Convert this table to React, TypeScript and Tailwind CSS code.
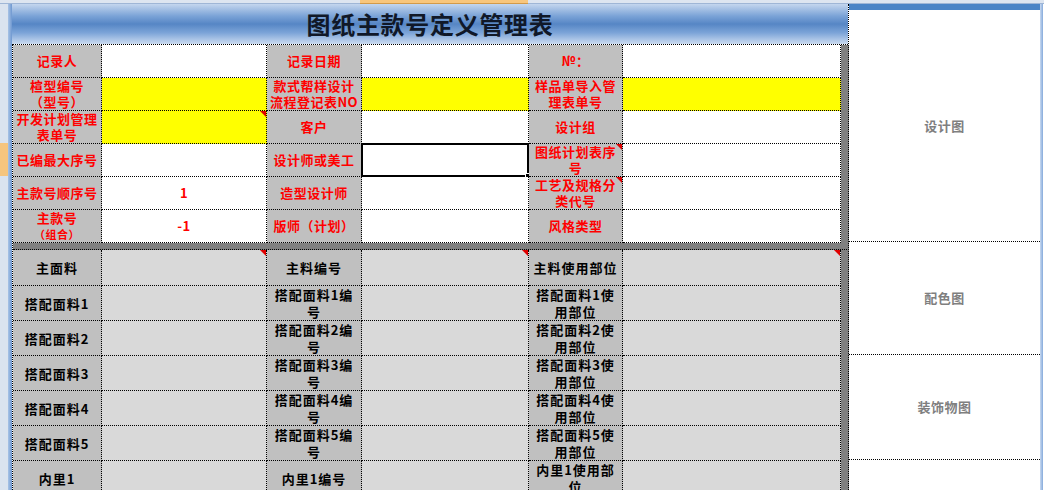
import type { ReactNode } from 'react';

type CellProps = {
  children?: ReactNode;
  className?: string;
  comment?: boolean;
  selected?: boolean;
};

function Cell({ children, className = '', comment, selected }: CellProps) {
  return (
    <div
      className={`relative flex items-center justify-center px-[2px] text-center border-r border-b border-dotted border-black font-bold text-[13px] leading-[16px] tracking-[0.5px] ${className}`}
    >
      {children}
      {comment && (
        <div className="absolute top-0 right-0 w-0 h-0 border-l-[6px] border-l-transparent border-t-[6px] border-t-[#e00000]" />
      )}
      {selected && (
        <div className="absolute -left-[1px] -top-[1px] -right-[1px] -bottom-[1px] border-2 border-black">
          <div className="absolute -right-[4px] -bottom-[4px] w-[6px] h-[6px] bg-black border border-white" />
        </div>
      )}
    </div>
  );
}

const label = 'bg-[#c0c0c0] text-[#ff0000]';
const white = 'bg-white text-[#ff0000]';
const yellow = 'bg-[#ffff00]';
const strip = 'bg-[#808080]';
const grayLabel = 'bg-[#c0c0c0] text-black tracking-[1px] leading-[17px]';
const grayValue = 'bg-[#d9d9d9]';

const lower = [
  { a: '搭配面料1', b: '搭配面料1编', b2: '号', c: '搭配面料1使', c2: '用部位' },
  { a: '搭配面料2', b: '搭配面料2编', b2: '号', c: '搭配面料2使', c2: '用部位' },
  { a: '搭配面料3', b: '搭配面料3编', b2: '号', c: '搭配面料3使', c2: '用部位' },
  { a: '搭配面料4', b: '搭配面料4编', b2: '号', c: '搭配面料4使', c2: '用部位' },
  { a: '搭配面料5', b: '搭配面料5编', b2: '号', c: '搭配面料5使', c2: '用部位' },
  { a: '内里1', b: '内里1编号', b2: '', c: '内里1使用部', c2: '位' },
];

export default function App() {
  return (
    <div className="w-[1044px] h-[490px] overflow-hidden bg-white font-['Noto_Sans_CJK_SC',sans-serif]">
      {/* column header strip */}
      <div className="flex h-[4px]">
        <div className="w-[360px] bg-[#dde5f0] border-b border-[#9fb6d6]" />
        <div className="w-[168px] bg-[#f8c67c] border-b border-[#d29a4a]" />
        <div className="flex-1 bg-[#dde5f0] border-b border-[#9fb6d6]" />
      </div>

      <div className="flex">
        {/* row header strip */}
        <div className="flex w-[12px]">
          <div className="w-[8px] flex flex-col bg-[#dae3ef]">
            <div className="h-[139px]" />
            <div className="h-[33px] bg-[#f6c57e]" />
            <div className="flex-1" />
          </div>
          <div className="w-[4px] bg-gradient-to-r from-[#a8c3e6] to-[#6f98d0]" />
        </div>

        {/* main sheet */}
        <div className="w-[836px]">
          <div className="h-[40px] flex items-center justify-center bg-[linear-gradient(to_bottom,#c4d6ee_0%,#7ba3d7_30%,#5686c5_50%,#7ca4d8_72%,#cbdbf0_100%)]">
            <span className="text-[24px] font-bold tracking-[0.7px] text-[#101828]">图纸主款号定义管理表</span>
          </div>

          <div className="grid grid-cols-[89px_165px_95px_167px_94px_218px_8px] border-l border-t border-dotted border-black">
            {/* row 1 */}
            <Cell className={`h-[33px] ${label}`}>记录人</Cell>
            <Cell className={white} />
            <Cell className={label}>记录日期</Cell>
            <Cell className={white} />
            <Cell className={label}>№：</Cell>
            <Cell className={white} />
            <div className={strip} />

            {/* row 2 */}
            <Cell className={`h-[33px] ${label}`}>
              <span>
                楦型编号
                <br />
                （型号）
              </span>
            </Cell>
            <Cell className={yellow} />
            <Cell className={label}>款式帮样设计流程登记表NO</Cell>
            <Cell className={yellow} />
            <Cell className={label}>样品单导入管理表单号</Cell>
            <Cell className={yellow} />
            <div className={strip} />

            {/* row 3 */}
            <Cell className={`h-[33px] ${label}`}>开发计划管理表单号</Cell>
            <Cell className={yellow} comment />
            <Cell className={label}>客户</Cell>
            <Cell className={white} />
            <Cell className={label}>设计组</Cell>
            <Cell className={white} />
            <div className={strip} />

            {/* row 4 */}
            <Cell className={`h-[33px] ${label}`}>已编最大序号</Cell>
            <Cell className={white} />
            <Cell className={label}>设计师或美工</Cell>
            <Cell className={white} selected />
            <Cell className={label} comment>图纸计划表序号</Cell>
            <Cell className={white} />
            <div className={strip} />

            {/* row 5 */}
            <Cell className={`h-[33px] ${label}`}>主款号顺序号</Cell>
            <Cell className={white}>1</Cell>
            <Cell className={label}>造型设计师</Cell>
            <Cell className={white} />
            <Cell className={label} comment>工艺及规格分类代号</Cell>
            <Cell className={white} />
            <div className={strip} />

            {/* row 6 */}
            <Cell className={`h-[33px] ${label}`}>
              <span>
                主款号
                <br />
                <span className="text-[11px] leading-[14px]">（组合）</span>
              </span>
            </Cell>
            <Cell className={white}>-1</Cell>
            <Cell className={label}>版师（计划）</Cell>
            <Cell className={white} />
            <Cell className={label}>风格类型</Cell>
            <Cell className={white} />
            <div className={strip} />

            {/* separator */}
            <div className="col-span-7 h-[7px] bg-[#808080] border-b border-dotted border-black" />

            {/* lower section */}
            <Cell className={`h-[36px] ${grayLabel}`}>主面料</Cell>
            <Cell className={grayValue} comment />
            <Cell className={grayLabel}>主料编号</Cell>
            <Cell className={grayValue} comment />
            <Cell className={grayLabel}>主料使用部位</Cell>
            <Cell className={grayValue} comment />
            <div className={strip} />

            {lower.map((r) => (
              <div key={r.a} className="contents">
                <Cell className={`h-[35px] ${grayLabel}`}>{r.a}</Cell>
                <Cell className={grayValue} />
                <Cell className={grayLabel}>
                  <span>
                    {r.b}
                    {r.b2 && <br />}
                    {r.b2}
                  </span>
                </Cell>
                <Cell className={grayValue} />
                <Cell className={grayLabel}>
                  <span>
                    {r.c}
                    <br />
                    {r.c2}
                  </span>
                </Cell>
                <Cell className={grayValue} />
                <div className={strip} />
              </div>
            ))}
          </div>
        </div>

        {/* picture panel */}
        <div className="w-[192px] flex flex-col border-l border-dotted border-black">
          <div className="h-[6px] bg-[#4a84c6]" />
          <div className="h-[232px] flex items-center justify-center border-b border-dotted border-black text-[13px] font-bold text-[#7f7f7f] tracking-[0.5px]">
            设计图
          </div>
          <div className="h-[113px] flex items-center justify-center border-b border-dotted border-black text-[13px] font-bold text-[#7f7f7f] tracking-[0.5px]">
            配色图
          </div>
          <div className="h-[105px] flex items-center justify-center border-b border-dotted border-black text-[13px] font-bold text-[#7f7f7f] tracking-[0.5px]">
            装饰物图
          </div>
          <div className="flex-1" />
        </div>

        <div className="w-[3px] bg-gradient-to-r from-[#c9daf0] to-[#86aadb]" />
      </div>
    </div>
  );
}
